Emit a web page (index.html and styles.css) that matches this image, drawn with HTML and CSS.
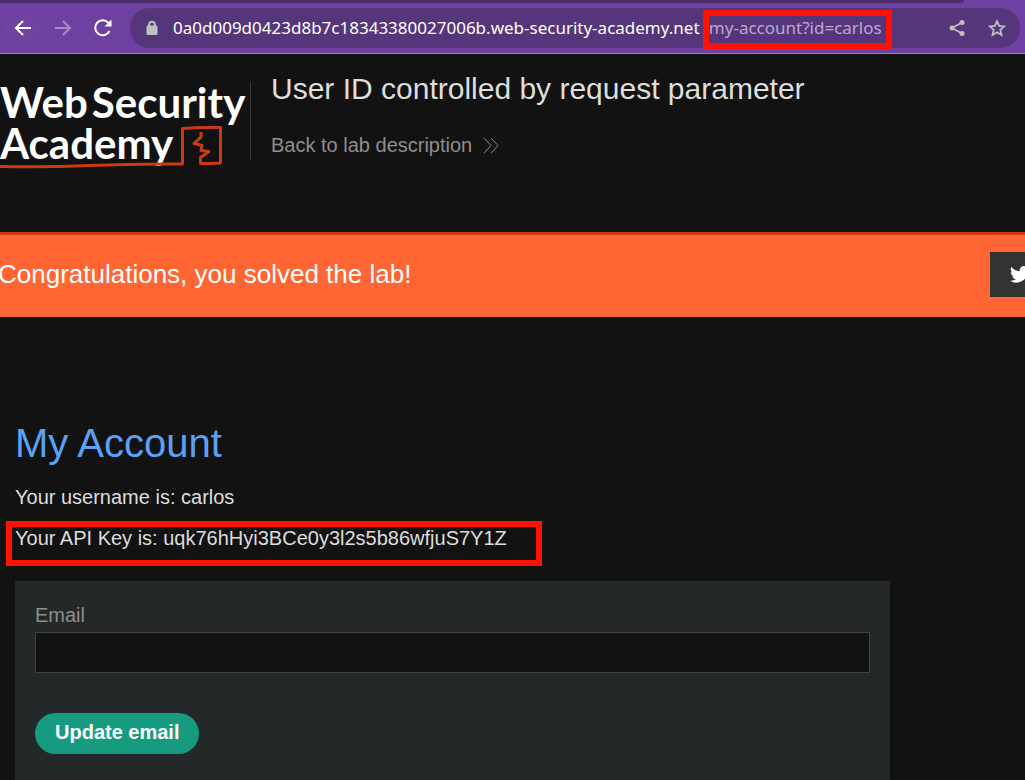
FILE: index.html
```
<!DOCTYPE html>
<html lang="en">
<head>
<meta charset="utf-8">
<title>User ID controlled by request parameter</title>
<link rel="stylesheet" href="styles.css">
</head>
<body>
<div class="browser">
  <div class="tabstrip"></div>
  <nav class="toolbar" aria-label="Browser">
    <button class="nav-btn nav-back" type="button" aria-label="Back"><svg width="20" height="20" viewBox="0 0 20 20"><path d="M18 10H3M10 3l-7 7 7 7"/></svg></button>
    <button class="nav-btn nav-forward" type="button" aria-label="Forward"><svg width="20" height="20" viewBox="0 0 20 20"><path d="M2 10h15M10 3l7 7-7 7"/></svg></button>
    <button class="nav-btn nav-reload" type="button" aria-label="Reload"><svg width="20" height="20" viewBox="0 0 20 20"><path d="M16.500 13A7.500 7.500 0 1 1 15.500 5"/><path class="solid" d="M18.500 1.500v7h-7z"/></svg></button>
    <div class="omnibox">
      <svg class="lock" width="12" height="16" viewBox="0 0 12 16"><rect x="0.500" y="5.500" width="11" height="9.500" rx="1.200"/><path d="M3.200 6V4.500a2.800 2.800 0 0 1 5.600 0V6"/></svg>
      <div class="url"><span class="host">0a0d009d0423d8b7c18343380027006b.web-security-academy.net</span><span class="path">/my-account?id=carlos</span></div>
      <button class="omni-btn" type="button" aria-label="Share"><svg width="18" height="18" viewBox="0 0 18 18"><path d="M14 3.500L4 9l10 5.500" fill="none" stroke="currentColor" stroke-width="1.800"/><circle cx="14" cy="3.500" r="2.500"/><circle cx="4" cy="9" r="2.500"/><circle cx="14" cy="14.500" r="2.500"/></svg></button>
      <button class="omni-btn" type="button" aria-label="Bookmark"><svg width="18" height="18" viewBox="0 0 18 18"><path d="M9 2.200l2.100 4.700 5.200.500-4 3.500 1.200 5.100L9 13.300 4.500 16l1.200-5.100-4-3.500 5.200-.500z" fill="none" stroke="currentColor" stroke-width="1.800"/></svg></button>
    </div>
  </nav>
</div>
<header class="lab-header">
  <div class="logo">
    <div class="logo-line"><span>Web</span><span>Security</span></div>
    <div class="logo-line"><span>Academy</span></div>
    <svg class="logo-mark" width="224" height="44" viewBox="0 0 224 44"><path d="M0 41.500Q45 42.500 90 40.500T182.500 39L182.500 3.500Q200 2 220.500 2.500L220.500 38Q210 38.500 200.500 38.500L200.500 32.500 209 26.500 201 25.500 202 20.500 194 18.500 201 12V7"/></svg>
  </div>
  <div class="lab-title">
    <h2>User ID controlled by request parameter</h2>
    <a href="#">Back to lab description <svg width="16" height="16" viewBox="0 0 16 16"><path d="M1 0l7 7.500-7 7.500M8 0l7 7.500-7 7.500"/></svg></a>
  </div>
</header>
<section class="banner">
  <h4>Congratulations, you solved the lab!</h4>
  <button class="share" type="button" aria-label="Share on Twitter"><svg width="20" height="17" viewBox="0 0 24 20"><path d="M24 2.400a10 10 0 0 1-2.800.800A5 5 0 0 0 23.300.400a10 10 0 0 1-3.100 1.200 4.900 4.900 0 0 0-8.400 4.500A14 14 0 0 1 1.700 1a4.900 4.900 0 0 0 1.500 6.600A5 5 0 0 1 1 7a4.900 4.900 0 0 0 3.900 4.900 5 5 0 0 1-2.200.100 4.900 4.900 0 0 0 4.600 3.400A10 10 0 0 1 0 17.400 14 14 0 0 0 21.500 5a10 10 0 0 0 2.500-2.600z"/></svg></button>
</section>
<main class="account">
  <h1>My Account</h1>
  <p>Your username is: carlos</p>
  <p class="marked">Your API Key is: uqk76hHyi3BCe0y3l2s5b86wfjuS7Y1Z</p>
  <form class="login-form">
    <label for="email">Email</label>
    <input id="email" type="email">
    <button class="submit" type="submit">Update email</button>
  </form>
</main>
</body>
</html>
```
FILE: styles.css
```
* { box-sizing: border-box; }
html { height: 100%; overflow: hidden; background: #121212; }
body {
  margin: 0;
  min-height: 100%;
  display: flex;
  flex-direction: column;
  color: #dededc;
  font: 20px/23px "Liberation Sans", Arial, sans-serif;
}
h1, h2, h4, p { margin: 0; font-weight: 400; }
button { border: 0; padding: 0; font: inherit; }
svg { display: block; }

/* Browser toolbar */
.browser { background: #6e40a1; border-bottom: 1px solid #9b7fbd; }
.tabstrip {
  height: 3px;
  margin-right: 61px;
  background: #4a2d6b;
  border-bottom-right-radius: 6px;
}
.toolbar { display: flex; align-items: center; padding: 5px; }
.nav-btn {
  width: 36px;
  height: 36px;
  margin-right: 4px;
  display: grid;
  place-items: center;
  border-radius: 50%;
  background: none;
  color: #fff;
}
.nav-back { background: #7043a3; }
.nav-forward { color: #a98cc7; }
.nav-btn svg { fill: none; stroke: currentColor; stroke-width: 2; }
.nav-btn .solid { fill: currentColor; stroke: none; }
.omnibox {
  flex: 1;
  height: 40px;
  margin-left: 5px;
  padding: 0 14px 0 16px;
  display: flex;
  align-items: center;
  border-radius: 20px;
  background: #56367a;
}
.lock { fill: #bdc1c6; margin-right: 15px; }
.lock path { fill: none; stroke: #bdc1c6; stroke-width: 2; }
.url {
  flex: 1;
  color: #fff;
  font: 17px/24px "Noto Sans", sans-serif;
  white-space: nowrap;
}
.path { position: relative; padding-left: 3px; color: #bba9cf; }
.path::after {
  content: "";
  position: absolute;
  inset: -6px -10px -10px 3px;
  border: 6px solid #ff1200;
}
.omni-btn { margin-left: 22px; background: none; color: #bfbfbf; fill: currentColor; }

/* Lab header */
.lab-header { display: flex; padding: 16px 0 62px; }
.logo {
  position: relative;
  width: 251px;
  height: 78px;
  margin-top: 12px;
  border-right: 1px solid #3a3a3a;
  color: #fff;
  font: 700 42px/41px Lato, sans-serif;
  white-space: nowrap;
}
.logo-line { display: flex; gap: 4px; }
.logo-mark { position: absolute; left: 0; top: 43px; }
.logo-mark path { fill: none; stroke: #cb3a10; stroke-width: 3; stroke-linejoin: round; }
.lab-title { padding-left: 20px; height: 100px; }
.lab-title h2 { font-size: 30px; line-height: 38px; }
.lab-title a {
  display: flex;
  align-items: center;
  gap: 11px;
  margin-top: 26px;
  color: #8e8e8e;
  text-decoration: none;
}
.lab-title a svg { fill: none; stroke: currentColor; }

/* Solved banner */
.banner {
  display: flex;
  justify-content: space-between;
  align-items: center;
  height: 85px;
  padding-bottom: 4px;
  border-top: 3px solid #cb3a10;
  background: #ff6633;
  color: #fff;
  overflow: hidden;
}
.banner h4 { margin-left: -2px; font-size: 26px; line-height: 30px; }
.share {
  flex: none;
  width: 60px;
  height: 45px;
  margin-right: -25px;
  display: grid;
  place-items: center;
  background: #333332;
}
.share svg { fill: #fff; }

/* Account page */
.account {
  flex: 1;
  display: flex;
  flex-direction: column;
  padding: 103px 135px 0 15px;
}
.account h1 { color: #5ba2f5; font-size: 40px; line-height: 46px; margin-bottom: 20px; }
.account p { margin-bottom: 18px; }
.account .marked { position: relative; align-self: flex-start; margin-bottom: 31px; }
.marked::after {
  content: "";
  position: absolute;
  inset: -6px -35px -16px -9px;
  border: 6px solid #ff1200;
}
.login-form {
  flex: 1;
  display: flex;
  flex-direction: column;
  padding: 23px 20px 26px;
  background: #252829;
}
.login-form label { color: #8e8e8e; margin-bottom: 5px; }
.login-form input {
  width: 100%;
  height: 41px;
  margin-bottom: 40px;
  padding: 0 10px;
  border: 1px solid #404243;
  background: #121212;
  color: #dededc;
  font: inherit;
}
.submit {
  align-self: flex-start;
  height: 41px;
  padding: 0 20px 2px;
  border-radius: 21px;
  background: #169b80;
  color: #fff;
  font-weight: 700;
}
```
